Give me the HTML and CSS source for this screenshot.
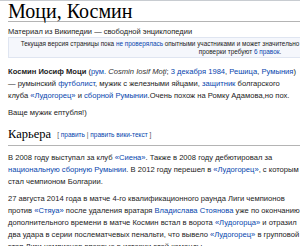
FILE: index.html
```html
<!DOCTYPE html>
<html lang="ru">
<head>
  <meta charset="UTF-8">
  <title>Моци, Космин</title>
  <link rel="stylesheet" href="styles.css">
</head>
<body>
  <div class="content">
    <h1 class="first-heading">Моци, Космин</h1>
    <div class="site-sub">Материал из Википедии — свободной энциклопедии</div>

    <div class="notice">
      Текущая версия страницы пока <a href="#">не проверялась</a> опытными участниками и может значительно отличаться от <a href="#">версии, проверенной 2 сентября 2014</a>;<br>
      проверки требуют <a href="#">6 правок</a>.
    </div>

    <div class="text">
      <p><b>Космин Иосиф Моци</b> (<a href="#">рум.</a> <i>Cosmin Iosif Moţi</i>; <a href="#">3 декабря</a> <a href="#">1984</a>, <a href="#">Решица</a>, <a href="#">Румыния</a>)<br>
      — румынский <a href="#">футболист</a>, мужик с железными яйцами, <a href="#">защитник</a> болгарского<br>
      клуба <a href="#">«Лудогорец»</a> и <a href="#">сборной Румынии</a>.Очень похож на Ромку Адамова,но пох.</p>
      <p>Ваще мужик ептубля!)</p>

      <h2 class="section">Карьера <span class="edit">[ <a href="#">править</a> | <a href="#">править вики-текст</a> ]</span></h2>
      <p>В 2008 году выступал за клуб <a href="#">«Сиена»</a>. Также в 2008 году дебютировал за<br>
      <a href="#">национальную сборную Румынии</a>. В 2012 году перешел в <a href="#">«Лудогорец»</a>, с которым<br>
      стал чемпионом Болгарии.</p>
      <p>27 августа 2014 года в матче 4-го квалификационного раунда Лиги чемпионов<br>
      против <a href="#">«Стяуа»</a> после удаления вратаря <a href="#">Владислава Стоянова</a> уже по окончанию<br>
      дополнительного времени в матче Космин встал в ворота <a href="#">«Лудогорца»</a> и отразил<br>
      два удара в серии послематчевых пенальти, что вывело <a href="#">«Лудогорец»</a> в групповой<br>
      этап Лиги чемпионов впервые в истории этой команды.</p>
    </div>
  </div>
</body>
</html>
```

FILE: styles.css
```css
body {
  margin: 0;
  background: #fff;
  font-family: "Liberation Sans", Arial, sans-serif;
  color: #222;
  overflow: hidden;
}

.content {
  border-top: 1px solid #c8ccd1;
  padding-left: 8px;
}

a {
  color: #0645ad;
  text-decoration: none;
}

.first-heading {
  font-family: "Liberation Serif", "Times New Roman", serif;
  font-weight: normal;
  font-size: 20px;
  line-height: 20px;
  margin: 0;
  border-bottom: 1px solid #b4b4b4;
  color: #000;
}

.site-sub {
  font-size: 7.5px;
  line-height: 10px;
  margin-top: 5px;
}

.notice {
  width: 462px;
  background: #f5f7fc;
  border: 1px solid #dfe5f1;
  font-size: 6.4px;
  line-height: 8px;
  text-align: center;
  white-space: nowrap;
  padding: 2px 0 1px;
}

.text {
  font-size: 7.6px;
  line-height: 12px;
  white-space: nowrap;
  margin-top: 8px;
}

p {
  margin: 0 0 5px;
}

i {
  color: #333;
}

.section {
  font-family: "Liberation Serif", "Times New Roman", serif;
  font-weight: normal;
  font-size: 12.5px;
  line-height: 16px;
  margin: 7px 0 0;
  padding-bottom: 2px;
  border-bottom: 1px solid #b4b4b4;
  color: #000;
}

.edit {
  font-family: "Liberation Sans", Arial, sans-serif;
  font-size: 6.5px;
  color: #555;
  margin-left: 3px;
  vertical-align: 1px;
}

.section + p {
  margin-top: 6px;
}
```
